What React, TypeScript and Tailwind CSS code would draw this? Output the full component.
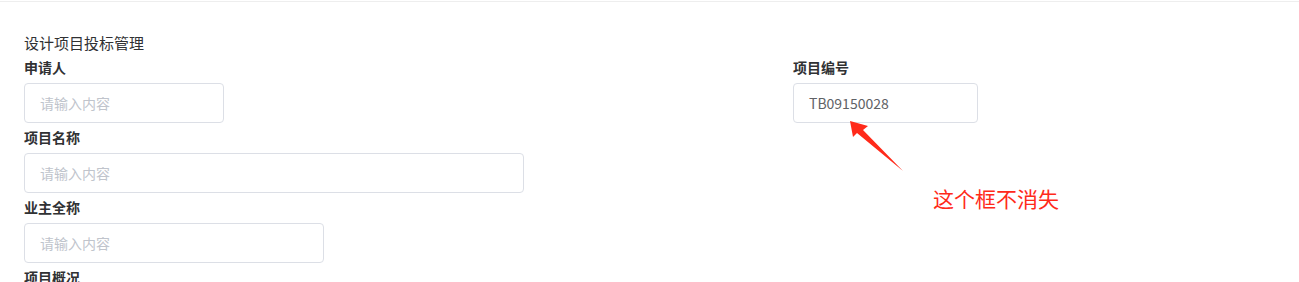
import React from "react";

const font = { fontFamily: '"Noto Sans CJK SC", "Noto Sans", sans-serif' };

function Label({ children }: { children: React.ReactNode }) {
  return (
    <div className="pt-[4px] pb-[6px] text-[14px] leading-[20px] font-bold text-[#303133]">
      {children}
    </div>
  );
}

function Input({ w, value }: { w: string; value?: string }) {
  return (
    <div
      className={`${w} h-[40px] border border-[#dcdfe6] rounded-[4px] px-[15px] flex items-center text-[14px] bg-white`}
    >
      {value ? (
        <span className="text-[#606266]">{value}</span>
      ) : (
        <span className="text-[#c0c4cc]">请输入内容</span>
      )}
    </div>
  );
}

export default function App() {
  return (
    <div className="relative w-[1299px] h-[282px] overflow-hidden bg-white" style={font}>
      <div className="h-[2px] border-b border-[#eeeeee]" />
      <div className="px-[24px] pt-[31px]">
        <div className="text-[15px] leading-[20px] text-[#303133]">设计项目投标管理</div>
        <div className="flex">
          <div className="w-[769px]">
            <Label>申请人</Label>
            <Input w="w-[200px]" />
            <Label>项目名称</Label>
            <Input w="w-[500px]" />
            <Label>业主全称</Label>
            <Input w="w-[300px]" />
            <Label>项目概况</Label>
          </div>
          <div>
            <Label>项目编号</Label>
            <Input w="w-[185px]" value="TB09150028" />
          </div>
        </div>
      </div>
      <svg
        className="absolute left-0 top-0 pointer-events-none"
        width="1299"
        height="282"
        viewBox="0 0 1299 282"
      >
        <polygon
          points="850,121 868,126 863,130 903,171 857,133 853,137"
          fill="#ff2a1a"
        />
      </svg>
      <div className="absolute left-[933px] top-[184px] text-[21px] leading-[28px] text-[#ff2a1a]">
        这个框不消失
      </div>
    </div>
  );
}
